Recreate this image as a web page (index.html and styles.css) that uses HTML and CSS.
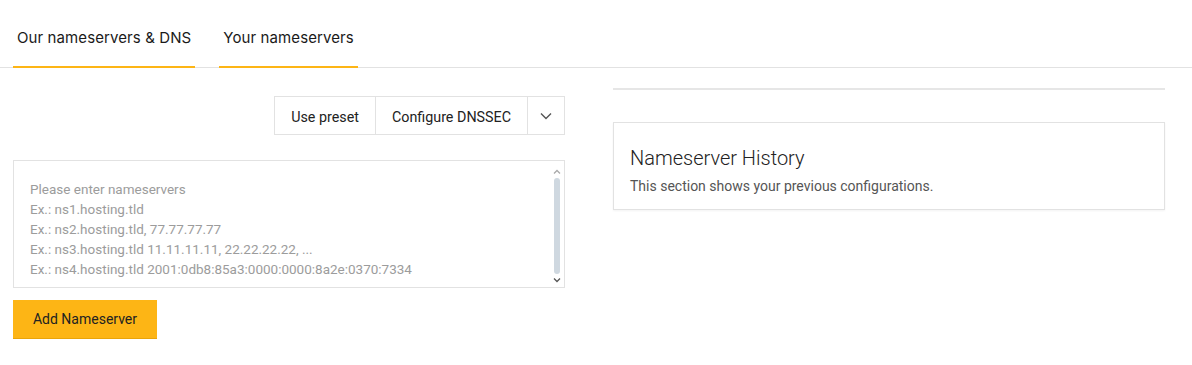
FILE: index.html
```html
<!DOCTYPE html>
<html lang="en">
<head>
    <meta charset="UTF-8">
    <title>Nameservers</title>
    <link rel="stylesheet" href="styles.css">
</head>
<body>
    <nav class="tabs">
        <a class="tab">Our nameservers &amp; DNS</a>
        <a class="tab">Your nameservers</a>
    </nav>

    <div class="content">
        <div class="col">
            <div class="toolbar">
                <div class="btn-group">
                    <button class="btn">Use preset</button>
                    <button class="btn">Configure DNSSEC</button>
                    <button class="btn btn-caret">
                        <svg width="12" height="8" viewBox="0 0 12 8"><path d="M1 1.5l5 5 5-5" fill="none" stroke="#555" stroke-width="1.4"/></svg>
                    </button>
                </div>
            </div>

            <div class="ns-box">
                <textarea class="ns-input" placeholder="Please enter nameservers&#10;Ex.: ns1.hosting.tld&#10;Ex.: ns2.hosting.tld, 77.77.77.77&#10;Ex.: ns3.hosting.tld 11.11.11.11, 22.22.22.22, ...&#10;Ex.: ns4.hosting.tld 2001:0db8:85a3:0000:0000:8a2e:0370:7334"></textarea>
                <div class="fake-scroll">
                    <svg width="8" height="6" viewBox="0 0 8 6"><path d="M1 4.5l3-3 3 3" fill="none" stroke="#aaa" stroke-width="1.3"/></svg>
                    <div class="thumb"></div>
                    <svg width="8" height="6" viewBox="0 0 8 6"><path d="M1 1.5l3 3 3-3" fill="none" stroke="#555" stroke-width="1.3"/></svg>
                </div>
            </div>

            <button class="btn-primary">Add Nameserver</button>
        </div>

        <div class="col">
            <div class="divider"></div>
            <div class="card">
                <h2>Nameserver History</h2>
                <p>This section shows your previous configurations.</p>
            </div>
        </div>
    </div>
</body>
</html>
```

FILE: styles.css
```css
:root {
    --yellow: #fdb515;
    --line: #e2e2e2;
    --text: #222;
}

body {
    margin: 0;
    background: #fff;
    color: var(--text);
    font-family: Roboto, "Liberation Sans", sans-serif;
}

.tabs {
    display: flex;
    gap: 24px;
    padding-left: 13px;
    border-bottom: 1px solid var(--line);
    height: 67px;
}

.tab {
    font-family: Inter, Roboto, sans-serif;
    font-size: 15px;
    letter-spacing: 0.1px;
    line-height: 20px;
    padding: 28px 4px 18px;
    border-bottom: 2px solid var(--yellow);
    color: #1a1a1a;
    margin-bottom: -1px;
}

.content {
    display: grid;
    grid-template-columns: 552px 552px;
    gap: 48px;
    padding: 0 27px 0 13px;
}

.toolbar {
    display: flex;
    justify-content: flex-end;
    margin-top: 28px;
}

.btn-group {
    display: flex;
    border: 1px solid var(--line);
}

.btn {
    font-family: Roboto, sans-serif;
    font-size: 14.3px;
    color: #222;
    background: #fff;
    border: 0;
    border-left: 1px solid var(--line);
    height: 37px;
    padding: 2px 16px 0;
}

.btn:first-child {
    border-left: 0;
}

.btn-caret {
    width: 37px;
    padding: 0;
    display: flex;
    align-items: center;
    justify-content: center;
}

.ns-box {
    position: relative;
    margin-top: 25px;
}

.ns-input {
    display: block;
    box-sizing: border-box;
    width: 100%;
    height: 128px;
    border: 1px solid var(--line);
    padding: 18px 30px 0 16px;
    font-family: Roboto, sans-serif;
    font-size: 13.5px;
    line-height: 20px;
    resize: none;
    overflow: hidden;
    outline: none;
}

.ns-input::placeholder {
    color: #9c9c9c;
}

.fake-scroll {
    position: absolute;
    top: 9px;
    bottom: 5px;
    right: 4px;
    width: 8px;
    display: flex;
    flex-direction: column;
    align-items: center;
    gap: 3px;
}

.thumb {
    flex: 1;
    width: 6px;
    border-radius: 3px;
    background: #cfd8e0;
}

.btn-primary {
    margin-top: 12px;
    width: 144px;
    height: 39px;
    background: var(--yellow);
    border: 0;
    border-bottom: 1px solid #e9a40a;
    font-family: Roboto, sans-serif;
    font-size: 14px;
    color: #222;
}

.divider {
    height: 2px;
    background: #e6e6e6;
    margin-top: 20px;
}

.card {
    margin-top: 32px;
    border: 1px solid var(--line);
    box-shadow: 0 1px 2px rgba(0, 0, 0, 0.05);
    padding: 23px 16px 14px;
}

.card h2 {
    margin: 0;
    font-size: 20px;
    font-weight: 300;
    line-height: 24px;
    color: #222;
}

.card p {
    margin: 7px 0 0;
    font-size: 14px;
    line-height: 18px;
    color: #555;
}
```
